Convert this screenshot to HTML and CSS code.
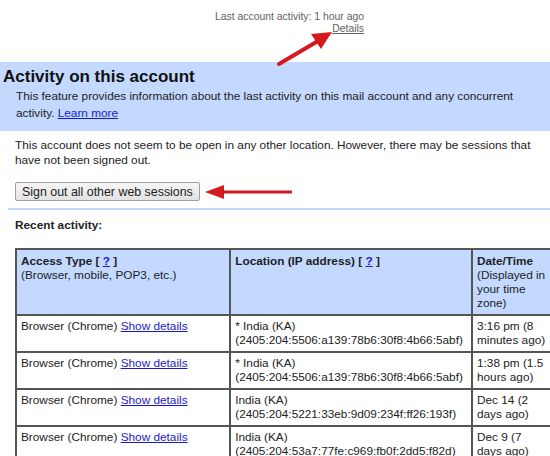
FILE: index.html
```html
<!DOCTYPE html>
<html>
<head>
<meta charset="utf-8">
<link rel="stylesheet" href="styles.css">
</head>
<body>
<div class="top">
  <div>Last account activity: 1 hour ago</div>
  <div><a href="#">Details</a></div>
</div>
<div class="band">
  <h2 class="title">Activity on this account</h2>
  <p class="intro">This feature provides information about the last activity on this mail account and any concurrent activity. <a href="#" class="link">Learn more</a></p>
</div>
<div class="main">
  <p class="note">This account does not seem to be open in any other location. However, there may be sessions that have not been signed out.</p>
  <button class="btn">Sign out all other web sessions</button>
</div>
<div class="rule"></div>
<div class="recent">
  <div class="recent-title">Recent activity:</div>
  <table class="activity">
    <colgroup><col class="c1"><col class="c2"><col class="c3"></colgroup>
    <tr class="head">
      <td><b>Access Type [ <a href="#" class="link">?</a> ]</b><br>(Browser, mobile, POP3, etc.)</td>
      <td><b>Location (IP address) [ <a href="#" class="link">?</a> ]</b></td>
      <td><b>Date/Time</b><br>(Displayed in your time zone)</td>
    </tr>
    <tr>
      <td>Browser (Chrome) <a href="#" class="link">Show details</a></td>
      <td>* India (KA)<br>(2405:204:5506:a139:78b6:30f8:4b66:5abf)</td>
      <td>3:16 pm (8 minutes ago)</td>
    </tr>
    <tr>
      <td>Browser (Chrome) <a href="#" class="link">Show details</a></td>
      <td>* India (KA)<br>(2405:204:5506:a139:78b6:30f8:4b66:5abf)</td>
      <td>1:38 pm (1.5 hours ago)</td>
    </tr>
    <tr>
      <td>Browser (Chrome) <a href="#" class="link">Show details</a></td>
      <td>India (KA)<br>(2405:204:5221:33eb:9d09:234f:ff26:193f)</td>
      <td>Dec 14 (2 days ago)</td>
    </tr>
    <tr>
      <td>Browser (Chrome) <a href="#" class="link">Show details</a></td>
      <td>India (KA)<br>(2405:204:53a7:77fe:c969:fb0f:2dd5:f82d)</td>
      <td>Dec 9 (7 days ago)</td>
    </tr>
  </table>
</div>
<svg class="arrow" width="550" height="456" viewBox="0 0 550 456">
  <line x1="279" y1="64" x2="318" y2="41" stroke="#d41a1f" stroke-width="4" stroke-linecap="round"/>
  <polygon points="332,32 311,34 321,49" fill="#d41a1f"/>
</svg>
<svg class="arrow" width="550" height="456" viewBox="0 0 550 456">
  <line x1="222" y1="192" x2="292" y2="192" stroke="#d41a1f" stroke-width="3"/>
  <polygon points="205,192 224,185 224,199" fill="#d41a1f"/>
</svg>
</body>
</html>
```
FILE: styles.css
```css
html, body {
  margin: 0;
  padding: 0;
}
body {
  width: 550px;
  height: 456px;
  overflow: hidden;
  position: relative;
  background: #fff;
  font-family: "Liberation Sans", Arial, sans-serif;
  font-size: 11.8px;
  color: #222;
}
.top {
  width: 364px;
  text-align: right;
  padding-top: 11px;
  font-size: 10.4px;
  line-height: 12px;
  color: #5f5f5f;
}
.top a {
  color: #5f5f5f;
  text-decoration: underline;
}
.band {
  margin-top: 27px;
  height: 69px;
  background: #c3d9ff;
  overflow: hidden;
}
.title {
  margin: 0;
  padding: 4px 0 0 3px;
  font-size: 17px;
  line-height: 21px;
  font-weight: bold;
  color: #111;
}
.intro {
  margin: 1px 0 0 16px;
  padding-right: 8px;
  line-height: 17px;
}
.link {
  color: #1a1acc;
  text-decoration: underline;
}
.main {
  padding: 7px 15px 0 15px;
}
.note {
  margin: 0;
  line-height: 15px;
}
.btn {
  margin-top: 14px;
  width: 185px;
  height: 19px;
  padding: 0 0 0 6px;
  text-align: left;
  border: 1px solid #a0a0a0;
  border-radius: 2px;
  background: linear-gradient(#f6f6f6, #e2e2e2);
  font-family: "Liberation Sans", Arial, sans-serif;
  font-size: 12.4px;
  color: #222;
}
.rule {
  margin: 7px 0 0 8px;
  height: 2px;
  background: #c3d9ff;
}
.recent {
  padding: 0 0 0 15px;
}
.recent-title {
  font-weight: bold;
  margin-top: 8px;
  line-height: 15px;
}
.activity {
  margin-top: 15px;
  border-collapse: collapse;
  table-layout: fixed;
  width: 560px;
  border: 2px solid #555;
}
.c1 { width: 210px; }
.c2 { width: 237px; }
.c3 { width: 100px; }
.activity td {
  border: 2px solid #555;
  padding: 3px 4px 4px 4px;
  vertical-align: top;
  line-height: 14px;
}
.activity td:nth-child(3) {
  padding-right: 23.5px;
}
.head td {
  background: #c3d9ff;
  height: 54px;
  padding-top: 4px;
}
.arrow {
  position: absolute;
  left: 0;
  top: 0;
  pointer-events: none;
}
```
